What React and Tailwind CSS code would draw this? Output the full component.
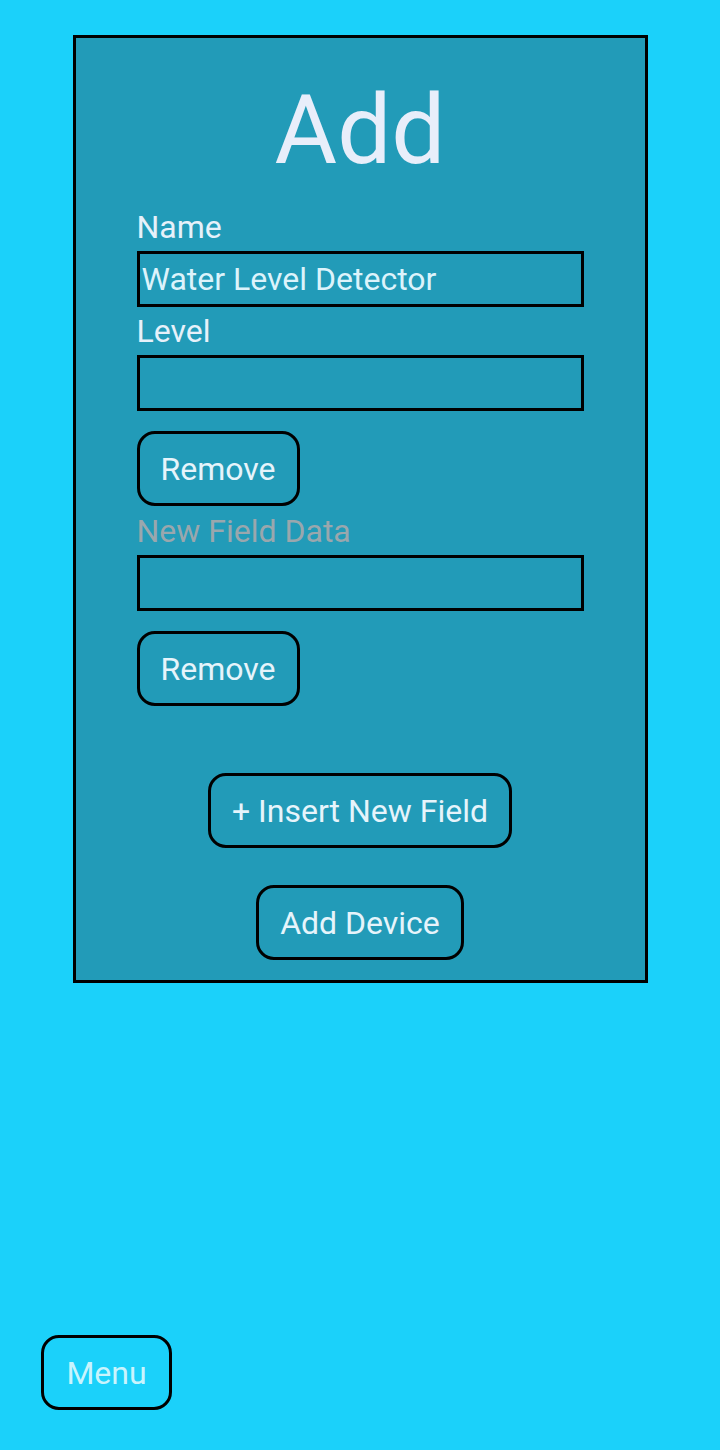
import { useState } from 'react';

const Field = ({ label, value, onChange, first }) => (
  <>
    <label
      className={`block h-[32px] text-[32px] leading-[32px] text-[#e6f1fa] ${first ? 'mt-[33px]' : 'mt-[8px]'}`}
    >
      {label}
    </label>
    <input
      value={value}
      onChange={onChange}
      className="mt-[8px] h-[56px] w-full border-[3px] border-black bg-transparent pl-[2px] text-[32px] text-[#dcf3fb] outline-none"
    />
  </>
);

const Button = ({ children, className = '' }) => (
  <button
    className={`h-[75px] rounded-[18px] border-[3px] border-black px-[21px] text-[32px] leading-none ${className}`}
  >
    {children}
  </button>
);

export default function App() {
  const [name, setName] = useState('Water Level Detector');
  const [level, setLevel] = useState('');
  const [extra, setExtra] = useState('');

  return (
    <div className="flex min-h-[1450px] flex-col bg-[#1bd1fa] pt-[35px] font-['Roboto',sans-serif]">
      {/* Add card */}
      <div className="mx-auto flex h-[948px] w-[575px] flex-col border-[3px] border-black bg-[#229bb8] px-[61px]">
        <h1 className="mt-[44px] h-[96px] text-center text-[96px] leading-[96px] text-[#e8eefa]">Add</h1>

        <Field first label="Name" value={name} onChange={(e) => setName(e.target.value)} />
        <Field label="Level" value={level} onChange={(e) => setLevel(e.target.value)} />
        <Button className="mt-[20px] self-start text-[#e6f4fb]">Remove</Button>

        <label className="mt-[9px] block h-[32px] text-[32px] leading-[32px] text-[#9aa7ad]">New Field Data</label>
        <input
          value={extra}
          onChange={(e) => setExtra(e.target.value)}
          className="mt-[8px] h-[56px] w-full border-[3px] border-black bg-transparent pl-[2px] text-[32px] text-[#dcf3fb] outline-none"
        />
        <Button className="mt-[20px] self-start text-[#e6f4fb]">Remove</Button>

        <Button className="mt-[67px] h-[74px] self-center text-[#e6f4fb]">+ Insert New Field</Button>
        <Button className="mt-[37px] h-[74px] self-center text-[#e6f4fb]">Add Device</Button>
      </div>

      {/* Bottom menu */}
      <div className="mt-auto mb-[40px] ml-[41px]">
        <Button className="h-[74px] w-[131px] px-0 text-[#c9f4fd]">Menu</Button>
      </div>
    </div>
  );
}
